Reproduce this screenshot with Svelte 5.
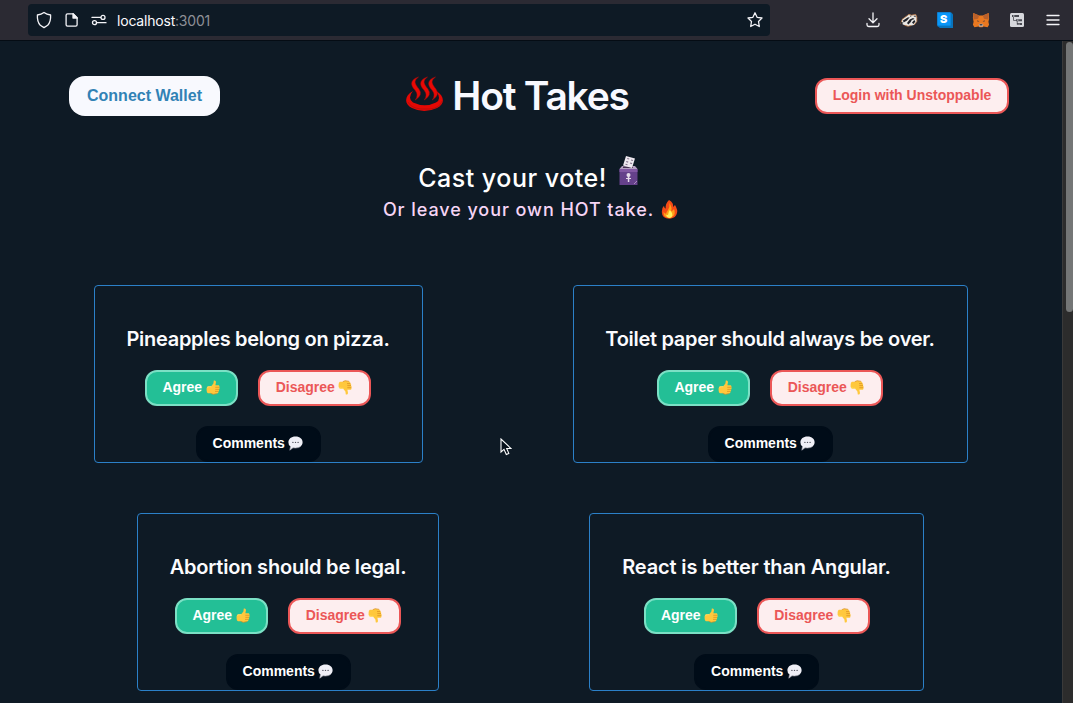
<script>
  const rows = [
    [
      { title: 'Pineapples belong on pizza.', width: 329, spacing: -0.3 },
      { title: 'Toilet paper should always be over.', width: 395, spacing: -0.3 }
    ],
    [
      { title: 'Abortion should be legal.', width: 302, spacing: -0.2 },
      { title: 'React is better than Angular.', width: 335, spacing: -0.16 }
    ]
  ];
</script>

{#snippet thumb(down)}
  <svg class="emoji" class:down viewBox="0 0 15 15">
    <path d="M5.2 6.2 7.4 3.4 7.8 .6Q9.8 0 10 2L9.4 5.2H12.8Q14 6 13.3 7.1 14.2 8.3 13.1 9.3 13.6 10.5 12.5 11.2 12.8 13 11.1 13.6L7.2 14.3 4.8 13.3H1.9Q.6 12.6.6 10.2V8.2Q.8 6.6 2.3 6.3Z" fill="#ffc83d" />
    <path d="M9.3 7.3h4M9.3 9.4h3.7M9 11.4h3.4M4.8 13.3l2.4 1 4-.7" fill="none" stroke="#d98b20" stroke-width=".7" />
    <path d="M1.2 7.2Q3.5 6.4 5.3 6.7" fill="none" stroke="#ffe170" stroke-width=".8" />
  </svg>
{/snippet}

<div class="browser">
  <div class="toolbar">
    <div class="address">
      <svg class="shield" width="16" height="18" viewBox="0 0 16 18"><path d="M8 1.4Q10.7 3.4 14.6 4 15 10.7 11.7 14.3L8 16.6 4.3 14.3Q1 10.7 1.4 4 5.3 3.4 8 1.4Z" /></svg>
      <svg class="doc" width="14" height="16" viewBox="0 0 14 16"><path d="M2.5 1.8h5.6l4 4v7q0 1.4-1.4 1.4H2.5q-1.4 0-1.4-1.4V3.2q0-1.4 1.4-1.4Z" /><path d="M8 1.8v4.3h4.3Z" fill="#f4f4f8" /></svg>
      <svg class="perm" width="16" height="14" viewBox="0 0 16 14"><path d="M1 4.4h8.5M6.4 9.7H15" /><circle cx="12" cy="4.4" r="2" /><circle cx="3.5" cy="9.7" r="2" /></svg>
      <span class="url">localhost<span>:3001</span></span>
      <svg class="star" width="18" height="18" viewBox="0 0 18 18"><path d="m9 1.8 2.1 4.5 4.9.7-3.5 3.5.8 5L9 13.2l-4.3 2.3.8-5L2 7l4.9-.7Z" /></svg>
    </div>
    <div class="tools">
      <svg width="18" height="18" viewBox="0 0 18 18"><path d="M9 2v9.5M5 7.7l4 4 4-4M3 12.5v1.3q0 1.7 1.7 1.7h8.6q1.7 0 1.7-1.7v-1.3" /></svg>
      <svg width="18" height="18" viewBox="0 0 18 18" style:stroke="none">
        <path d="M1 12.3 2.2 8.3 6.5 5.2 9 3.3 11.5 4.2 15.7 3.4 16.8 6 16.8 10.5 14 14 8 15.2 3.5 13.8Z" fill="#e9e7e4" />
        <path d="m3 9.6 4.7-3.2 2-.2-2.7 3.3-3.4 1.9ZM7 12l2.7-3.5L13 7l1.6 1-2.8 1-1.2 2.3L8.3 13.4ZM12 11.5l2.3-2.6 1.1 1.6-2 2.4ZM9.7 4.4l2 .7-1.3.6ZM13.4 5l2-.6.3 1.8Z" fill="#202128" />
        <path d="M1 12.3 2.2 8.3 6.5 5.2 9 3.3 11.5 4.2 15.7 3.4 16.8 6V10.5L14 14M5 14.4l3 .8 3-.6" fill="none" stroke="#c07b45" stroke-width=".8" stroke-dasharray="3 1" />
        <circle cx="1.9" cy="12" r=".9" fill="#16171b" />
      </svg>
      <svg width="18" height="18" viewBox="0 0 18 18" style:stroke="none">
        <path d="M15 1.2 17 3.2V17H4L1.2 15Z" fill="#0874bd" /><path d="M1.2 1.2H14.6V14.6H1.2Z" fill="#0996f8" />
        <text x="4" y="11.9" fill="#fff" font-family="Inter, sans-serif" font-size="11" font-weight="900">S</text>
      </svg>
      <svg width="18" height="18" viewBox="0 0 18 18" style:stroke="none">
        <path d="m1.2 2 6 2.4h3.6l6-2.4.3 5.7-.7 3 .7 3-1.5 2.5-4-.8-1.2.8H7.6l-1.2-.8-4 .8L.9 13.7l.7-3L.9 7Z" fill="#e97820" />
        <path d="m1.2 2 6 2.4L6 7.8 1.5 8.4ZM16.8 2l-6 2.4L12 7.8l4.5.6Z" fill="#b9602b" />
        <path d="m5.4 9.3 2 1.2-2 .1ZM12.6 9.3l-2 1.2 2 .1Z" fill="#353340" /><path d="m6.6 13.4 1.2-.7h2.4l1.2.7-.7 2H7.4Z" fill="#c9b8ad" /><path d="M7.6 13.2h2.8v1.2H7.6Z" fill="#292a33" />
      </svg>
      <svg width="18" height="18" viewBox="0 0 18 18" style:stroke="none">
        <rect x="2" y="2" width="14" height="14" rx="1.5" fill="#d6d7dc" /><path d="M4 4h7v2H4ZM8 8.2h6v2H8ZM9.5 12.1h4.5v2H9.5ZM5.2 6h.8v3h2v.8H5.2ZM8.8 10h.8v3.6h-.8Z" fill="#494a52" /><path d="M5 4.6h1.5v.8H5ZM9 8.8h1.5v.8H9ZM10.3 12.7h1.5v.8h-1.5Z" fill="#d6d7dc" />
      </svg>
      <svg width="18" height="18" viewBox="0 0 18 18"><path d="M3 4.5h12M3 9h12M3 13.5h12" /></svg>
    </div>
  </div>

  <div class="view">
    <main>
      <header>
        <button class="wallet">Connect Wallet</button>
        <h1>
          <svg width="38" height="36" viewBox="0 0 38 36">
            <path d="M7 15C-2 20-2 28 6 32q12 6 25 0c8-4 8-12-1-17q6 8 0 11.5-11 5.5-23 0Q1 22 7 15Z" fill="#e40804" />
            <path d="M2 26q3 6 13 7h9q10-1 12-8" fill="none" stroke="#ae100c" stroke-width=".8" />
            <g fill="#e90905" stroke="#a90d0b" stroke-width=".5"><path d="M12.5 1C3 4 5 10 9 14q4 5 .3 10 8-5 3.6-11C9 8 7 5 12.5 1Z" /><path d="M21.5 1C12 4 14 10 18 14q4 5 .3 10 8-5 3.6-11C18 8 16 5 21.5 1Z" /><path d="M29.5 1C20 4 22 10 26 14q4 5 .3 10 8-5 3.6-11C26 8 24 5 29.5 1Z" /></g>
          </svg>
          <span>Hot Takes</span>
        </h1>
        <button class="login disagree">Login with Unstoppable</button>
      </header>

      <section class="intro">
        <h2><span>Cast your vote!</span>
          <svg width="19" height="30" viewBox="0 0 19 30">
            <path d="M3 10h13l2.5 3H.5Z" fill="#b6a1c4" /><path d="M4 10.5h10V12H4Z" fill="#443451" />
            <path d="m7 0 9 2.5L13 12 4 9.5Z" fill="#eee9f0" /><path d="m8.2 2.5 2 .5M12 4l2 .5M7.2 5.5l2 .6M11 7l2 .6M6.5 8.3l2 .5" stroke="#85758e" stroke-width="1.1" />
            <path d="M.5 13h18v16H.5Z" fill="#65418b" /><path d="M.5 13h18v3H.5Z" fill="#8258a4" />
            <circle cx="9.5" cy="19" r="2" fill="#e5dbea" /><path d="M8.8 19h1.5v7H8.8ZM7 22h5v1H7Z" fill="#e5dbea" /><path d="m15 28 3-3" stroke="#aa8bbf" />
          </svg>
        </h2>
        <h3><span>Or leave your own HOT take.</span>
          <svg width="17" height="19" viewBox="0 0 17 19"><path d="M8 0q5 3 4 7l2-2q3 5 2 8-1 5-7 5.7Q1 19 .8 12 .5 8 3 5.8q0 2 1.6 3Q4 4 8 0Z" fill="#f44b16" /><path d="M8.5 3q3 5 1.5 8 2 0 3-2 2 5-1 7.2-2 2-5 1.6-5-.7-4.4-6 1 2 2.4 2 .6-2 2-3.7Q9 7 8.5 3Z" fill="#ff9f18" /><path d="M8.8 10q3 3 2.6 5.5Q10.6 18 8.3 18 5 17 5.3 14.5q1 1 1.8.3.4-3 1.7-4.8Z" fill="#fff05c" /></svg>
        </h3>
      </section>

      <section class="takes">
        {#each rows as row}
          <div class="row">
            {#each row as take}
              <article style:width="{take.width}px">
                <h4 style:letter-spacing="{take.spacing}px">{take.title}</h4>
                <div class="votes">
                  <button class="agree">Agree {@render thumb(false)}</button>
                  <button class="disagree">Disagree {@render thumb(true)}</button>
                </div>
                <button class="comments">Comments
                  <svg class="emoji" viewBox="0 0 15 15"><path d="M7.5.5C12 .5 14.6 3 14.6 6.3s-2.8 5.7-7.1 5.7L5 11.8 1.8 14.2l.7-3.6Q.3 9 .4 6.3C.5 2.8 3.2.5 7.5.5Z" fill="#efeff6" /><path d="M2.5 10.6 1.8 14.2 5 11.8l2.5.2q3.5 0 5.5-1.8" fill="none" stroke="#a9aab3" stroke-width=".6" /><g fill="#555661"><circle cx="4.9" cy="6.4" r=".7" /><circle cx="7.5" cy="6.4" r=".7" /><circle cx="10.1" cy="6.4" r=".7" /></g></svg>
                </button>
              </article>
            {/each}
          </div>
        {/each}
      </section>
    </main>
    <div class="scroll"><div></div></div>
  </div>
  <svg class="cursor" width="12" height="18" viewBox="0 0 12 18"><path d="M1 1v13l3-2.7L6.3 16.5l2.5-1.1L6.7 10.5H11Z" fill="#08111b" stroke="#fff" stroke-width="1.1" /></svg>
</div>

<style>
  :global(body) { margin: 0; background: #0e1a25; overflow: hidden; }
  * { box-sizing: border-box; }
  svg { flex: none; display: block; }
  h1, h2, h3, h4 { margin: 0; white-space: nowrap; }
  .browser { position: relative; width: 1073px; height: 703px; overflow: hidden; display: flex; flex-direction: column; font-family: Inter, sans-serif; }
  .toolbar { height: 41px; flex: none; background: #2b2a33; border-bottom: 1px solid #050c14; display: flex; align-items: flex-start; justify-content: space-between; }
  .address { margin: 4px 0 0 28px; width: 742px; height: 32px; background: #0e1a25; border-radius: 4px; display: flex; align-items: center; padding: 0 6.5px 0 7.5px; }
  .address svg, .tools svg { fill: none; stroke: #f4f4f8; stroke-width: 1.3; stroke-linejoin: round; stroke-linecap: round; }
  .doc { margin-left: 13.5px; }
  .perm { margin-left: 12px; }
  .url { margin-left: 10px; font-size: 14px; letter-spacing: -.2px; color: #fbfbfe; }
  .url span { color: #8f9097; }
  .star { margin-left: auto; }
  .tools { display: flex; gap: 18px; margin: 11px 11px 0 0; }
  .view { flex: 1; min-height: 0; display: flex; }
  main { width: 1062px; overflow: hidden; background: #0e1a25; }
  .scroll { width: 11px; background: #2c2c2c; border-left: 1px solid #3a3a3a; padding: 1px 0 0 3px; }
  .scroll div { height: 270px; background: #747676; border-radius: 4px; }
  header { height: 110px; padding: 0 53px 0 69px; display: flex; align-items: center; justify-content: space-between; }
  button { font-family: "Liberation Sans", sans-serif; font-weight: 700; font-size: 14px; height: 36px; padding: 0 0 2px; border-radius: 12px; display: flex; align-items: center; justify-content: center; white-space: nowrap; border: 2px solid; flex: none; }
  .wallet { width: 151px; height: 40px; padding: 0; border: 0; border-radius: 16px; background: #f8f9fe; color: #3182b5; font-size: 16px; }
  h1 { display: flex; align-items: center; gap: 8px; color: #f8f9ff; font-size: 39px; line-height: 48px; font-weight: 600; }
  h1 span { letter-spacing: -1.25px; }
  h1 svg { margin-top: -4px; }
  .login { width: 194px; }
  .intro { height: 134px; display: flex; flex-direction: column; align-items: center; padding-top: 5px; }
  h2, h3 { display: flex; align-items: center; }
  h2 { height: 40px; gap: 12px; margin-right: 6px; font-size: 25px; font-weight: 550; letter-spacing: .5px; color: #fff; }
  h2 span { padding-top: 4px; }
  h2 svg { margin-top: -10px; }
  h3 { height: 26px; gap: 7px; margin-right: 1px; font-size: 18px; font-weight: 550; letter-spacing: .93px; color: #f6d5f5; }
  h3 span { padding-top: 1px; }
  .takes { display: flex; flex-direction: column; gap: 50px; }
  .row { display: flex; justify-content: center; gap: 150px; padding-right: 1px; }
  article { height: 178px; border: 1px solid #2b80c8; border-radius: 4px; display: flex; flex-direction: column; align-items: center; padding-top: 40px; flex: none; }
  h4 { height: 26px; line-height: 26px; font-size: 20px; font-weight: 600; color: #fbfbfe; }
  .votes { display: flex; gap: 20px; margin-top: 18px; }
  .votes button, .comments { gap: 3.5px; }
  .agree { width: 93px; background: #23bf96; border-color: #7be0c5; color: #fff; }
  .disagree { background: #fdeeef; border-color: #eb5757; color: #eb5757; }
  .votes .disagree { width: 113px; }
  .comments { width: 125px; margin-top: 20px; border-color: #000c18; background: #000c18; color: #fff; }
  .emoji { width: 15px; height: 15px; }
  .down { transform: scaleY(-1); }
  .cursor { position: absolute; left: 500px; top: 438px; }
</style>
